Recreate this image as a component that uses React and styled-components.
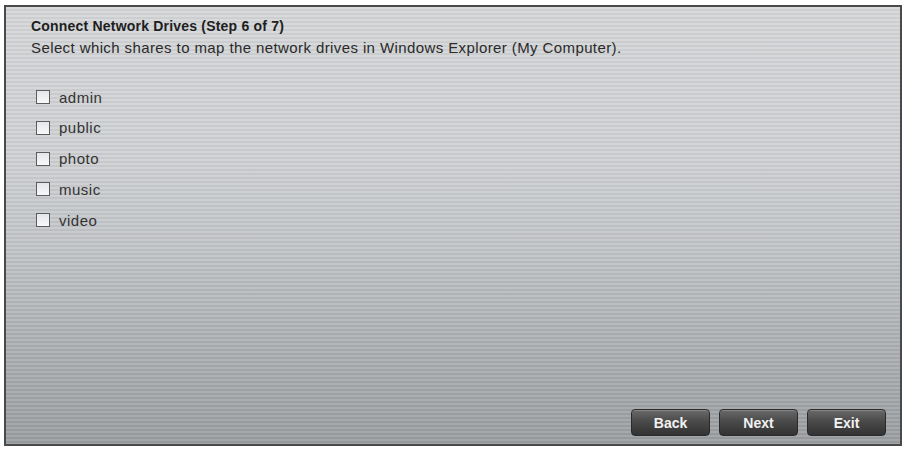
import React from 'react'
import styled, { createGlobalStyle } from 'styled-components'

const GlobalStyle = createGlobalStyle`
	body {
		margin: 0;
		background: #fff;
		font-family: 'Liberation Sans', Arial, sans-serif;
	}
`

const shares = ['admin', 'public', 'photo', 'music', 'video']

const App = () => {
	return (
		<>
			<GlobalStyle />
			<Page>
				<Panel>
					<Title>Connect Network Drives (Step 6 of 7)</Title>
					<Hint>Select which shares to map the network drives in Windows Explorer (My Computer).</Hint>
					<ShareList>
						{shares.map((name) => (
							<ShareRow key={name}>
								<Box type="checkbox" />
								<span>{name}</span>
							</ShareRow>
						))}
					</ShareList>
					<Footer>
						<Button>Back</Button>
						<Button>Next</Button>
						<Button>Exit</Button>
					</Footer>
				</Panel>
			</Page>
		</>
	)
}

const Page = styled.div`
	padding: 5px 2px 5px 4px;
	width: 904px;
	height: 451px;
	box-sizing: border-box;
`
const Panel = styled.div`
	height: 441px;
	box-sizing: border-box;
	border: 2px solid #4a4a4a;
	display: flex;
	flex-direction: column;
	padding: 11px 14px 8px 25px;
	background:
		repeating-linear-gradient(
			to bottom,
			rgba(255, 255, 255, 0.08) 0px,
			rgba(255, 255, 255, 0.08) 2px,
			rgba(0, 0, 0, 0.045) 2px,
			rgba(0, 0, 0, 0.045) 4px
		),
		linear-gradient(to bottom, #d5d7d9 0%, #cfd1d4 35%, #c2c5c8 55%, #abaeb1 80%, #9c9fa2 100%);
`
const Title = styled.div`
	font-weight: bold;
	font-size: 14px;
	line-height: 16px;
	color: #1e1e1e;
	letter-spacing: 0.2px;
`
const Hint = styled.div`
	margin-top: 5px;
	font-size: 15px;
	line-height: 17px;
	color: #2a2a2a;
	letter-spacing: 0.4px;
`
const ShareList = styled.div`
	display: flex;
	flex-direction: column;
	gap: 16.8px;
	margin-top: 34px;
	padding-left: 5px;
`
const ShareRow = styled.label`
	display: flex;
	align-items: center;
	gap: 9px;
	height: 14px;
	font-size: 15px;
	color: #333;
	letter-spacing: 0.5px;
`
const Box = styled.input`
	appearance: none;
	margin: 0;
	width: 14px;
	height: 14px;
	box-sizing: border-box;
	border: 1px solid #5c5c5c;
	background: linear-gradient(to bottom, #e4e7ea, #f7f8f9);
`
const Footer = styled.div`
	margin-top: auto;
	display: flex;
	justify-content: flex-end;
	gap: 9px;
`
const Button = styled.button`
	width: 79px;
	height: 27px;
	border: 1px solid #2a2a2a;
	border-radius: 4px;
	background: linear-gradient(to bottom, #6a6a6a 0%, #4a4a4a 45%, #333 100%);
	box-shadow: inset 0 1px 0 rgba(255, 255, 255, 0.2);
	color: #f2f2f2;
	font-family: 'Liberation Sans', Arial, sans-serif;
	font-weight: bold;
	font-size: 14px;
	cursor: pointer;
`
export default App
